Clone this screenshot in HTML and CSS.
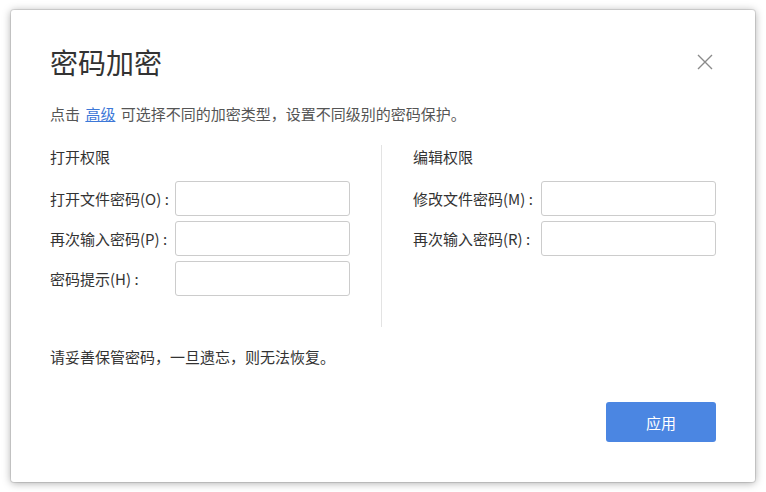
FILE: index.html
```html
<!DOCTYPE html>
<html lang="zh-CN">
<head>
<meta charset="utf-8">
<title>密码加密</title>
<link rel="stylesheet" href="styles.css">
</head>
<body>
<div class="dialog">
  <div class="header">
    <h1 class="title">密码加密</h1>
    <button class="close" aria-label="关闭">
      <svg width="16" height="16" viewBox="0 0 16 16"><path d="M1 1L15 15M15 1L1 15" stroke="#8a8a8a" stroke-width="1.4" fill="none"/></svg>
    </button>
  </div>
  <p class="subtitle">点击 <a class="link" href="#">高级</a> 可选择不同的加密类型，设置不同级别的密码保护。</p>
  <div class="columns">
    <div class="col col-left">
      <div class="heading">打开权限</div>
      <div class="rows">
        <div class="row"><span class="label">打开文件密码(O) :</span><input class="field" type="password"></div>
        <div class="row"><span class="label">再次输入密码(P) :</span><input class="field" type="password"></div>
        <div class="row"><span class="label">密码提示(H) :</span><input class="field" type="text"></div>
      </div>
    </div>
    <div class="col col-right">
      <div class="heading">编辑权限</div>
      <div class="rows">
        <div class="row"><span class="label label-r">修改文件密码(M) :</span><input class="field" type="password"></div>
        <div class="row"><span class="label label-r">再次输入密码(R) :</span><input class="field" type="password"></div>
      </div>
    </div>
  </div>
  <p class="note">请妥善保管密码，一旦遗忘，则无法恢复。</p>
  <div class="footer">
    <button class="apply">应用</button>
  </div>
</div>
</body>
</html>
```
FILE: styles.css
```css
html, body {
  margin: 0;
  padding: 0;
  background: #ffffff;
}
body {
  padding: 10px 11px;
  font-family: "Noto Sans CJK SC", "Noto Sans", sans-serif;
  color: #333333;
  font-size: 15px;
}
.dialog {
  box-sizing: border-box;
  width: 744px;
  height: 472px;
  background: #ffffff;
  border-radius: 3px;
  box-shadow: 0 0 0 1px rgba(0,0,0,0.10), 0 1px 8px rgba(0,0,0,0.35);
  padding: 32px 39px 0 39px;
}
.header {
  display: flex;
  align-items: center;
  justify-content: space-between;
  height: 40px;
}
.title {
  margin: 0;
  font-size: 28px;
  font-weight: normal;
  line-height: 40px;
  color: #333333;
}
.close {
  border: 0;
  background: none;
  padding: 0;
  margin-right: 3px;
  width: 16px;
  height: 16px;
  display: flex;
}
.subtitle {
  margin: 22px 0 0 0;
  line-height: 20px;
  color: #555555;
  word-spacing: 2px;
}
.link {
  color: #3d78d8;
  text-decoration: underline;
}
.columns {
  display: flex;
  margin-top: 21px;
}
.col {
  padding-top: 2px;
}
.col-left {
  width: 332px;
  box-sizing: border-box;
  padding-right: 33px;
  padding-bottom: 31px;
  border-right: 1px solid #e3e3e3;
}
.col-right {
  padding-left: 31px;
  flex: 1;
}
.heading {
  line-height: 20px;
}
.rows {
  margin-top: 14px;
  display: flex;
  flex-direction: column;
  gap: 5px;
}
.row {
  display: flex;
  align-items: center;
  height: 35px;
}
.label {
  width: 125px;
  flex: none;
  white-space: nowrap;
}
.label-r {
  width: 128px;
}
.field {
  box-sizing: border-box;
  width: 175px;
  height: 35px;
  border: 1px solid #cccccc;
  border-radius: 3px;
  margin: 0;
  padding: 0 8px;
  background: #ffffff;
  font: inherit;
}
.note {
  margin: 20px 0 0 0;
  line-height: 20px;
}
.footer {
  display: flex;
  justify-content: flex-end;
  margin-top: 35px;
}
.apply {
  width: 110px;
  height: 40px;
  border: 0;
  border-radius: 3px;
  background: #4b86e2;
  color: #ffffff;
  font-family: inherit;
  font-size: 15px;
}
```
